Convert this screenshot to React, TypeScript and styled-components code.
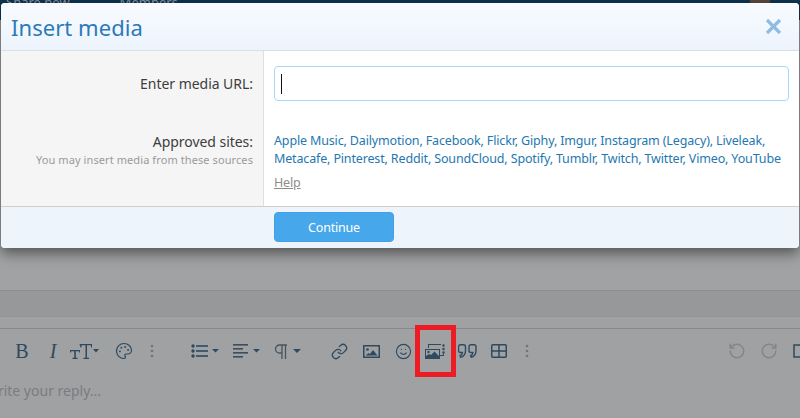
import React from "react";
import styled, { createGlobalStyle } from "styled-components";
import { Link, Smile, RotateCcw, RotateCw, Palette } from "lucide-react";

const Global = createGlobalStyle`
  html, body { margin: 0; padding: 0; width: 800px; height: 418px; overflow: hidden; background: #a0a1a3; }
  * { box-sizing: border-box; }
`;
const Page = styled.div`
  position: relative;
  width: 800px;
  height: 418px;
  overflow: hidden;
  background: #a0a1a3;
  display: flex;
  flex-direction: column;
  font-family: "Noto Sans", "Open Sans", sans-serif;
`;
const TopBar = styled.div`
  height: 20px;
  background: #0f3550;
  color: #8a9aa6;
  font-size: 13px;
  line-height: 4px;
  display: flex;
  gap: 50px;
  padding-left: 6px;
  overflow: hidden;
  flex: none;
`;
const Avatar = styled.span`
  width: 20px;
  height: 20px;
  margin-left: auto;
  margin-right: 30px;
  background: #5b4a3c;
`;
const Spacer = styled.div`
  height: 270px;
  flex: none;
  background: #a1a2a4;
`;
const Band = styled.div`
  height: 27px;
  flex: none;
  background: #979899;
  border-top: 1px solid #8c8d8e;
  border-bottom: 1px solid #939495;
`;
const Strip = styled.div`
  height: 12px;
  flex: none;
  background: #a0a1a2;
  border-bottom: 1px solid #88898a;
`;
const Toolbar = styled.div`
  height: 44px;
  flex: none;
  display: flex;
  align-items: center;
  color: #2d4a60;
`;
const Tool = styled.span<{ $w: number }>`
  width: ${(p) => p.$w}px;
  flex: none;
  display: flex;
  align-items: center;
  justify-content: center;
`;
const Letter = styled.span<{ $i?: boolean }>`
  font-family: "Liberation Serif", serif;
  font-size: 20px;
  font-style: ${(p) => (p.$i ? "italic" : "normal")};
  line-height: 1;
`;
const Reply = styled.div`
  margin-left: -15px;
  font-size: 14px;
  line-height: 20px;
  color: #7b7c7e;
  padding-top: 8px;
  white-space: nowrap;
`;
const Dialog = styled.div`
  position: absolute;
  left: 1px;
  top: 3px;
  width: 798px;
  height: 245px;
  background: #fff;
  border-radius: 4px;
  box-shadow: 0 5px 14px rgba(0, 0, 0, 0.5);
  overflow: hidden;
  display: flex;
  flex-direction: column;
`;
const Head = styled.div`
  height: 48px;
  flex: none;
  background: linear-gradient(#f8fbff, #edf4fd);
  border-bottom: 1px solid #dfdfdf;
  display: flex;
  align-items: center;
  justify-content: space-between;
  padding: 0 17px 0 10px;
`;
const Title = styled.h2`
  margin: 0;
  font-weight: 400;
  font-size: 22px;
  letter-spacing: 0.05px;
  color: #2b7ab8;
`;
const Body = styled.div`
  flex: 1;
  display: flex;
  min-height: 0;
`;
const Labels = styled.div`
  width: 263px;
  flex: none;
  background: #f5f5f5;
  border-right: 1px solid #dfdfdf;
  text-align: right;
  padding: 0 10px;
`;
const Fields = styled.div`
  flex: 1;
  padding: 15px 10px 0 10px;
`;
const LabelText = styled.div<{ $top: number }>`
  margin-top: ${(p) => p.$top}px;
  font-size: 14px;
  letter-spacing: -0.04px;
  line-height: 20px;
  color: #3d3d3d;
`;
const Hint = styled.div`
  font-size: 11px;
  letter-spacing: 0.09px;
  line-height: 16px;
  color: #9a9a9a;
`;
const UrlBox = styled.div`
  height: 35px;
  border: 1px solid #a9d8f6;
  border-radius: 4px;
  padding: 7px 6px;
`;
const Caret = styled.div`
  width: 1px;
  height: 20px;
  background: #111;
`;
const Sites = styled.div`
  margin-top: 31px;
  font-size: 12.5px;
  letter-spacing: -0.15px;
  line-height: 18px;
  color: #2577b1;
  white-space: nowrap;
`;
const Help = styled.a`
  display: block;
  margin-top: 6px;
  font-size: 12.5px;
  letter-spacing: -0.15px;
  line-height: 18px;
  color: #8c8c8c;
  text-decoration: underline;
`;
const Foot = styled.div`
  height: 42px;
  flex: none;
  background: #edf4fc;
  border-top: 1px solid #cfcfcf;
  padding: 5px 0 0 273px;
`;
const Btn = styled.button`
  width: 120px;
  height: 30px;
  background: #47a7eb;
  border: 1px solid #42a0e3;
  border-radius: 4px;
  color: #fff;
  font-family: inherit;
  font-size: 12.5px;
  letter-spacing: -0.2px;
  padding: 0;
`;
const Marker = styled.div`
  position: absolute;
  left: 415px;
  top: 325px;
  width: 41px;
  height: 52px;
  border: 5px solid #ed1c24;
`;

const Dots = () => (
  <svg width="4" height="14" viewBox="0 0 4 14"><g fill="#6a7681"><circle cx="2" cy="2" r="1.3" /><circle cx="2" cy="7" r="1.3" /><circle cx="2" cy="12" r="1.3" /></g></svg>
);

export default function App() {
  return (
    <Page>
      <Global />
      <TopBar><span>Share new</span><span>Members</span><Avatar /></TopBar>
      <Spacer />
      <Band />
      <Strip />
      <Toolbar>
        <Tool $w={6} />
        <Tool $w={32}><Letter>B</Letter></Tool>
        <Tool $w={30}><Letter $i>I</Letter></Tool>
        <Tool $w={32}>
          <svg width="29" height="15" viewBox="0 0 29 15" fill="currentColor">
            <path d="M0 6h10v2.600H9V7.200H5.800V13.800H7.500V15H2.500v-1.200H4.200V7.200H1v1.400H0z" />
            <path d="M9.500 0H22v3.400h-1V1.200h-4V13.800H19V15h-5.500v-1.200h2V1.200h-4v2.200h-1z" />
            <path d="M23 5h6l-3 3.500z" />
          </svg>
        </Tool>
        <Tool $w={48}><Palette size={18} strokeWidth={1.6} /></Tool>
        <Tool $w={8}><Dots /></Tool>
        <Tool $w={33} />
        <Tool $w={32}>
          <svg width="28" height="14" viewBox="0 0 28 14" fill="currentColor">
            <circle cx="2" cy="2" r="1.700" /><circle cx="2" cy="7" r="1.700" /><circle cx="2" cy="12" r="1.700" />
            <rect x="5" y="1.200" width="12" height="1.600" /><rect x="5" y="6.200" width="12" height="1.600" /><rect x="5" y="11.200" width="12" height="1.600" />
            <path d="M21 5h7l-3.500 3.500z" />
          </svg>
        </Tool>
        <Tool $w={50}>
          <svg width="27" height="14" viewBox="0 0 27 14" fill="#3f4c5c">
            <rect x="0" y="0" width="15" height="1.600" /><rect x="0" y="4" width="10" height="1.600" /><rect x="0" y="8" width="15" height="1.600" /><rect x="0" y="12" width="10" height="1.600" />
            <path d="M20 5h7l-3.500 3.500z" fill="#2d4a60" />
          </svg>
        </Tool>
        <Tool $w={32}>
          <svg width="27" height="15" viewBox="0 0 27 15" fill="none">
            <path d="M13 1H5.500a4 4 0 0 0 0 8H8M8 1v14M11.500 1v14" stroke="#48535f" strokeWidth="1.300" />
            <path d="M19 5h8l-4 4z" fill="currentColor" />
          </svg>
        </Tool>
        <Tool $w={20} />
        <Tool $w={32}><Link size={17} strokeWidth={1.8} /></Tool>
        <Tool $w={32}>
          <svg width="17" height="13" viewBox="0 0 17 13"><rect x=".75" y=".75" width="15.500" height="11.500" fill="none" stroke="currentColor" strokeWidth="1.500" /><circle cx="4.500" cy="4.500" r="1.300" fill="currentColor" /><path d="M2.500 10.500l3-2.500 1.500 1 3-4 4.500 5.500z" fill="currentColor" /></svg>
        </Tool>
        <Tool $w={32}><Smile size={17} strokeWidth={1.6} /></Tool>
        <Tool $w={32}>
          <svg width="20" height="16" viewBox="0 0 20 16" fill="currentColor">
            <rect x=".5" y="6.500" width="14" height="9" fill="none" stroke="currentColor" />
            <path d="M3 1h13v1H4v3H3z" />
            <path d="M1 15v-2l3-2 2 1 3.500-3.500L14 13v2z" />
            <circle cx="3.500" cy="9" r="1.200" />
            <circle cx="18.500" cy="2.500" r="1.200" /><circle cx="18.500" cy="6" r="1.200" /><circle cx="18.500" cy="9.500" r="1.200" />
            <path d="M15 12h3V11h1v2h-4z" />
          </svg>
        </Tool>
        <Tool $w={32}>
          <svg width="19" height="14" viewBox="0 0 19 14" fill="none" stroke="currentColor" strokeWidth="1.400" strokeLinejoin="round">
            <path d="M2.500.7h3A2 2 0 0 1 7.500 2.700v4c0 3.500-2 5.800-4.800 6.600l-.7-1.700c1.600-.6 2.400-1.700 2.500-3.100H2.500a2 2 0 0 1-2-2V2.700a2 2 0 0 1 2-2z" />
            <path d="M13 .7h3a2 2 0 0 1 2 2v4c0 3.500-2 5.800-4.800 6.600l-.7-1.700c1.600-.6 2.400-1.700 2.500-3.100H13a2 2 0 0 1-2-2V2.700a2 2 0 0 1 2-2z" />
          </svg>
        </Tool>
        <Tool $w={32}>
          <svg width="16" height="14" viewBox="0 0 16 14" fill="none" stroke="currentColor" strokeWidth="1.500"><rect x=".75" y=".75" width="14.500" height="12.500" rx="1" /><path d="M8 1v12M1 7h14" /></svg>
        </Tool>
        <Tool $w={24}><Dots /></Tool>
        <Tool $w={182} />
        <Tool $w={32}><RotateCcw size={18} strokeWidth={2} color="#858688" /></Tool>
        <Tool $w={32}><RotateCw size={18} strokeWidth={2} color="#858688" /></Tool>
        <Tool $w={24}>
          <svg width="8" height="14" viewBox="0 0 8 14"><path d="M7 1H1v12h6" fill="none" stroke="currentColor" strokeWidth="1.500" /></svg>
        </Tool>
      </Toolbar>
      <Reply>Write your reply...</Reply>
      <Dialog>
        <Head>
          <Title>Insert media</Title>
          <svg width="17" height="17" viewBox="0 0 17 17"><path d="M2 2l13 13M15 2L2 15" stroke="#8fbcdf" strokeWidth="3.200" /></svg>
        </Head>
        <Body>
          <Labels>
            <LabelText $top={23}>Enter media URL:</LabelText>
            <LabelText $top={38}>Approved sites:</LabelText>
            <Hint>You may insert media from these sources</Hint>
          </Labels>
          <Fields>
            <UrlBox><Caret /></UrlBox>
            <Sites>
              Apple Music, Dailymotion, Facebook, Flickr, Giphy, Imgur, Instagram (Legacy), Liveleak,<br />
              Metacafe, Pinterest, Reddit, SoundCloud, Spotify, Tumblr, Twitch, Twitter, Vimeo, YouTube
            </Sites>
            <Help>Help</Help>
          </Fields>
        </Body>
        <Foot><Btn>Continue</Btn></Foot>
      </Dialog>
      <Marker />
    </Page>
  );
}
